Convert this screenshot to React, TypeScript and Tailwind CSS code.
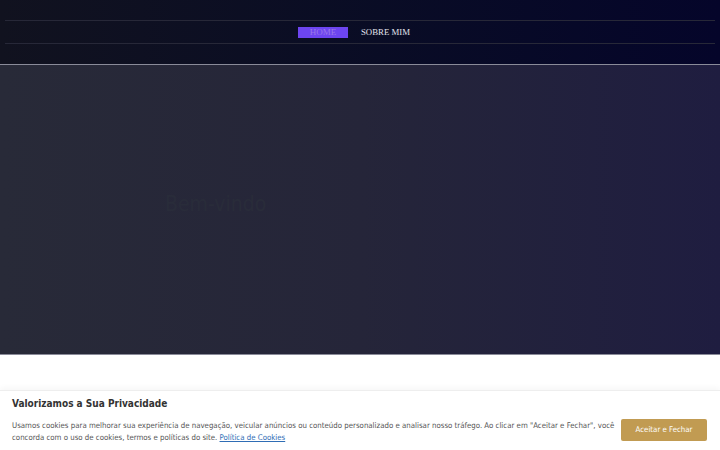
export default function App() {
  return (
    <div className="min-h-[450px] w-full bg-white relative overflow-hidden" style={{ fontFamily: '"DejaVu Sans", sans-serif' }}>
      {/* Header */}
      <header className="h-[64px] bg-gradient-to-r from-[#11121f] to-[#05052a] px-[5px] pt-[20px]">
        <nav className="border-y border-[#272838] h-[24px] flex items-center justify-center gap-[13px] pr-[12px]" style={{ fontFamily: '"Liberation Serif", serif' }}>
          <a className="bg-[#6d45f0] w-[50px] h-[11px] flex items-center justify-center text-[9px] leading-none text-[#9a78e6]">HOME</a>
          <a className="text-[8.8px] leading-none text-[#e4e4ee] font-medium">SOBRE MIM</a>
        </nav>
      </header>
      <div className="h-px bg-[#8a8b99]" />

      {/* Hero */}
      <section className="h-[290px] bg-gradient-to-r from-[#282a38] via-[#252539] to-[#1f1d40] border-b border-[#8a8b99] relative">
        <div className="absolute left-[165px] top-[124px] text-[21px] text-[#292c3a] select-none [font-stretch:condensed]">
          Bem-vindo
        </div>
      </section>

      {/* Cookie banner */}
      <div className="absolute left-0 right-0 bottom-0 h-[60px] bg-white border-t border-[#eeeeee] shadow-[0_-2px_6px_rgba(0,0,0,0.04)] flex items-center justify-between pl-[12px] pr-[13px] [font-stretch:condensed]">
        <div className="flex flex-col">
          <h2 className="text-[10px] font-bold text-[#333333] leading-none mb-[11px] mt-[2px]">Valorizamos a Sua Privacidade</h2>
          <p className="text-[7.8px] text-[#555555] leading-[12px] w-[605px]">
            Usamos cookies para melhorar sua experiência de navegação, veicular anúncios ou conteúdo personalizado e analisar nosso tráfego. Ao clicar em "Aceitar e Fechar", você concorda com o uso de cookies, termos e políticas do site.{' '}
            <a className="text-[#2f6db5] underline">Política de Cookies</a>
          </p>
        </div>
        <button className="w-[86px] h-[22px] bg-[#c19b52] text-white text-[7.8px] rounded-[2px] mt-[18px]">Aceitar e Fechar</button>
      </div>
    </div>
  );
}
